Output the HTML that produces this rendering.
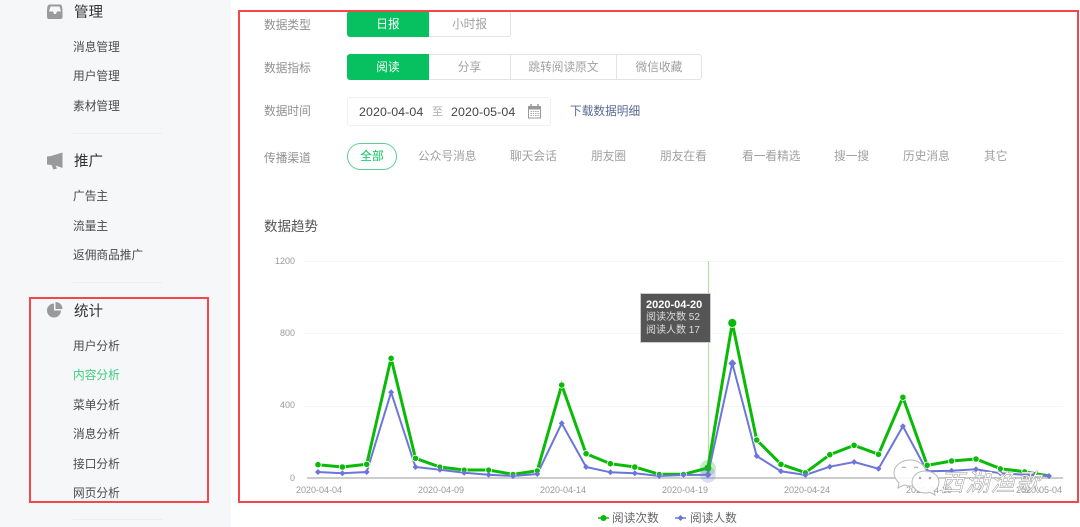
<!DOCTYPE html>
<html lang="zh">
<head>
<meta charset="utf-8">
<title>内容分析</title>
<style>
html,body{margin:0;padding:0;background:#fff}
#p{position:relative;width:1080px;height:527px;overflow:hidden;background:#fff;font-family:"Liberation Sans","Noto Sans CJK SC",sans-serif;font-size:11.7px;filter:blur(.35px)}
#p div,#p span{position:absolute;box-sizing:border-box}
.t{line-height:20px;white-space:nowrap}
.s{color:#4a4a4a;left:73px}
.h{color:#333;left:74px;font-size:14.5px}
.l{color:#8f8f8f;left:264px}
.c{color:#a0a0a0}
.b{border:1px solid #e0e4e7;color:#a0a0a0;text-align:center;height:26px;line-height:25px;background:#fff}
.g{background:#07c160;color:#fff;border-color:#07c160;border-radius:3px 0 0 3px}
.d{height:1px;left:73px;width:89px;background:#eceef0}
.a{font-size:9px;color:#999;line-height:12px;white-space:nowrap}
svg{position:absolute;left:0;top:0}
</style>
</head>
<body>
<div id="p">
<div style="left:0;top:0;width:231px;height:527px;background:#f6f7f9"></div>

<svg width="1080" height="527" viewBox="0 0 1080 527">
  <path fill="#9a9a9a" fill-rule="evenodd" d="M50 4.500h10q1.500 0 2 2l.5 3V17q0 2-2 2H49q-2 0-2-2V9.500l.5-3q.5-2 2.500-2zM50.500 6.500l-1.500 5h4l1 2.500h2l1-2.500h4l-1.500-5z"/>
  <path fill="#9a9a9a" d="M47 156.500l4-.5 11.500-3.500v15.500l-7-2.500 1.500 3-3.500 1-2-4.500-4.500-.5z"/>
  <path fill="#9a9a9a" d="M54 303.500v7h7a7 7 0 1 1-7-7z"/>
  <path fill="#9a9a9a" d="M55.500 302a7 7 0 0 1 7 7h-7z"/>
</svg>

<span class="t h" style="top:3px">管理</span>
<span class="t s" style="top:38px">消息管理</span>
<span class="t s" style="top:67px">用户管理</span>
<span class="t s" style="top:97px">素材管理</span>
<div class="d" style="top:133px"></div>
<span class="t h" style="top:152px">推广</span>
<span class="t s" style="top:187px">广告主</span>
<span class="t s" style="top:217px">流量主</span>
<span class="t s" style="top:246px">返佣商品推广</span>
<div class="d" style="top:282px"></div>
<span class="t h" style="top:302px">统计</span>
<span class="t s" style="top:337px">用户分析</span>
<span class="t s" style="top:366px;color:#3ccb7f">内容分析</span>
<span class="t s" style="top:396px">菜单分析</span>
<span class="t s" style="top:425px">消息分析</span>
<span class="t s" style="top:455px">接口分析</span>
<span class="t s" style="top:484px">网页分析</span>
<div class="d" style="top:519px"></div>

<span class="t l" style="top:16px">数据类型</span>
<div class="b g" style="left:347px;top:11px;width:82px">日报</div>
<div class="b" style="left:429px;top:11px;width:82px;border-left:0;border-radius:0 3px 3px 0">小时报</div>

<span class="t l" style="top:59px">数据指标</span>
<div class="b g" style="left:347px;top:54px;width:82px">阅读</div>
<div class="b" style="left:429px;top:54px;width:82px;border-left:0">分享</div>
<div class="b" style="left:510px;top:54px;width:107px">跳转阅读原文</div>
<div class="b" style="left:617px;top:54px;width:85px;border-left:0;border-radius:0 3px 3px 0">微信收藏</div>

<span class="t l" style="top:102px">数据时间</span>
<div style="left:347px;top:97px;width:204px;height:29px;border:1px solid #eef0f2;border-radius:3px"></div>
<span class="t" style="left:359px;top:102px;color:#444;font-size:12.400px;letter-spacing:.1px">2020-04-04</span>
<span class="t" style="left:432px;top:102px;color:#aaa;font-size:11px">至</span>
<span class="t" style="left:451px;top:102px;color:#444;font-size:12.400px;letter-spacing:.1px">2020-05-04</span>
<svg width="1080" height="527" viewBox="0 0 1080 527">
  <rect x="528.500" y="106.500" width="12" height="11.500" fill="none" stroke="#999"/>
  <rect x="528" y="106" width="13" height="3.500" fill="#999"/>
  <path d="M531 104v3M538 104v3" stroke="#999" stroke-width="1.500"/>
  <path d="M530.500 111.500h9M530.500 113.500h9M530.500 115.500h9" stroke="#aaa" stroke-dasharray="1.500 .8"/>
</svg>
<span class="t" style="left:570px;top:102px;color:#576b95">下载数据明细</span>

<span class="t l" style="top:149px">传播渠道</span>
<div style="left:347px;top:143px;width:50px;height:27px;border:1px solid #5ed093;border-radius:14px;color:#07c160;text-align:center;line-height:25px">全部</div>
<span class="t c" style="left:418px;top:147px">公众号消息</span>
<span class="t c" style="left:510px;top:147px">聊天会话</span>
<span class="t c" style="left:591px;top:147px">朋友圈</span>
<span class="t c" style="left:660px;top:147px">朋友在看</span>
<span class="t c" style="left:742px;top:147px">看一看精选</span>
<span class="t c" style="left:834px;top:147px">搜一搜</span>
<span class="t c" style="left:903px;top:147px">历史消息</span>
<span class="t c" style="left:984px;top:147px">其它</span>

<span class="t" style="left:264px;top:217px;color:#555;font-size:13.500px">数据趋势</span>

<span class="a" style="left:275px;top:255px">1200</span>
<span class="a" style="left:280px;top:327px">800</span>
<span class="a" style="left:280px;top:399px">400</span>
<span class="a" style="left:290px;top:472px">0</span>
<span class="a" style="left:296px;top:484px">2020-04-04</span>
<span class="a" style="left:418px;top:484px">2020-04-09</span>
<span class="a" style="left:540px;top:484px">2020-04-14</span>
<span class="a" style="left:662px;top:484px">2020-04-19</span>
<span class="a" style="left:784px;top:484px">2020-04-24</span>
<span class="a" style="left:906px;top:484px">2020-04-29</span>
<span class="a" style="left:1016px;top:484px">2020-05-04</span>

<svg width="1080" height="527" viewBox="0 0 1080 527">
  <path d="M303 261.500H1063M303 333.500H1063M303 406.500H1063" stroke="#f5f5f5"/>
  <path d="M307 478H1063" stroke="#ccc" stroke-width="2"/>
  <path d="M708.500 261V478" stroke="#a5e69c"/>
  <polyline fill="none" stroke="#09bb07" stroke-width="3" points="318,464.700 342.400,467 366.700,464.300 391.100,358.300 415.500,458.300 439.900,467 464.200,470 488.600,470 513,474.300 537.300,470.700 561.700,385 586.100,453.700 610.400,463.700 634.800,467 659.200,474.300 683.500,474.300 707.900,468 732.300,323 756.700,440 781,464.300 805.400,472.700 829.800,454.700 854.100,445.300 878.500,454.300 902.900,397.300 927.200,465.300 951.600,461 976,459 1000.400,468.700 1024.700,471.700 1049,476"/>
  <polyline fill="none" stroke="#6b76d8" stroke-width="2" points="318,472 342.400,473.300 366.700,472 391.100,392.300 415.500,467 439.900,469.700 464.200,472.700 488.600,474.700 513,476 537.300,474 561.700,423.300 586.100,467 610.400,472.300 634.800,473.300 659.200,476 683.500,475 707.900,474.700 732.300,363.300 756.700,456 781,471.300 805.400,475 829.800,466.700 854.100,462 878.500,468.700 902.900,426.300 927.200,471.300 951.600,470.700 976,469.300 1000.400,473.300 1024.700,474.700 1049,476"/>
  <g fill="#09bb07" stroke="#fff" stroke-width=".8">
    <circle cx="318" cy="464.700" r="3.200"/><circle cx="342.400" cy="467" r="3.200"/><circle cx="366.700" cy="464.300" r="3.200"/><circle cx="391.100" cy="358.300" r="3.200"/><circle cx="415.500" cy="458.300" r="3.200"/><circle cx="439.900" cy="467" r="3"/><circle cx="464.200" cy="470" r="3"/><circle cx="488.600" cy="470" r="3"/><circle cx="513" cy="474.300" r="3"/><circle cx="537.300" cy="470.700" r="3"/><circle cx="561.700" cy="385" r="3.200"/><circle cx="586.100" cy="453.700" r="3.200"/><circle cx="610.400" cy="463.700" r="3.200"/><circle cx="634.800" cy="467" r="3.200"/><circle cx="659.200" cy="474.300" r="3"/><circle cx="683.500" cy="474.300" r="3"/><circle cx="732.300" cy="323" r="4.500"/><circle cx="756.700" cy="440" r="3.200"/><circle cx="781" cy="464.300" r="3.200"/><circle cx="805.400" cy="472.700" r="3"/><circle cx="829.800" cy="454.700" r="3.200"/><circle cx="854.100" cy="445.300" r="3.200"/><circle cx="878.500" cy="454.300" r="3.200"/><circle cx="902.900" cy="397.300" r="3.200"/><circle cx="927.200" cy="465.300" r="3.200"/><circle cx="951.600" cy="461" r="3.200"/><circle cx="976" cy="459" r="3.200"/><circle cx="1000.400" cy="468.700" r="3"/><circle cx="1024.700" cy="471.700" r="3"/>
  </g>
  <circle cx="707.900" cy="468" r="8" fill="#09bb07" opacity=".25"/>
  <circle cx="707.900" cy="468" r="3.500" fill="#09bb07"/>
  <circle cx="707.900" cy="474.700" r="8" fill="#6b76d8" opacity=".25"/>
  <g fill="#6b76d8">
    <path d="M707.900 471l3.500 3.700-3.500 3.700-3.500-3.700z"/>
    <path d="M732.300 359.300l4 4-4 4-4-4z"/>
    <path d="M318 469l3 3-3 3-3-3zM342.400 470.300l3 3-3 3-3-3zM366.700 469l3 3-3 3-3-3zM391.100 389.300l3 3-3 3-3-3zM415.500 464l3 3-3 3-3-3zM439.900 466.700l3 3-3 3-3-3zM464.200 469.700l3 3-3 3-3-3zM488.600 471.700l3 3-3 3-3-3zM513 473l3 3-3 3-3-3zM537.300 471l3 3-3 3-3-3zM561.700 420.300l3 3-3 3-3-3zM586.100 464l3 3-3 3-3-3zM610.400 469.300l3 3-3 3-3-3zM634.800 470.300l3 3-3 3-3-3zM659.200 473l3 3-3 3-3-3zM683.500 472l3 3-3 3-3-3zM756.700 453l3 3-3 3-3-3zM781 468.300l3 3-3 3-3-3zM805.400 472l3 3-3 3-3-3zM829.800 463.700l3 3-3 3-3-3zM854.100 459l3 3-3 3-3-3zM878.500 465.700l3 3-3 3-3-3zM902.900 423.300l3 3-3 3-3-3zM927.200 468.300l3 3-3 3-3-3zM951.600 467.700l3 3-3 3-3-3zM976 466.300l3 3-3 3-3-3zM1000.400 470.300l3 3-3 3-3-3zM1024.700 471.700l3 3-3 3-3-3zM1049 473l3 3-3 3-3-3z"/>
  </g>
  <path d="M598 518h11" stroke="#09bb07" stroke-width="1.500"/>
  <circle cx="603.500" cy="518" r="3" fill="#09bb07"/>
  <path d="M675 518h11" stroke="#6b76d8" stroke-width="1.500"/>
  <path d="M680.500 515l3 3-3 3-3-3z" fill="#6b76d8"/>
</svg>

<div style="left:640px;top:293px;width:71px;height:50px;background:#555;border:1px solid #ccc"></div>
<span style="left:646px;top:299px;color:#fff;font-weight:bold;font-size:11px;line-height:13px;white-space:nowrap">2020-04-20</span>
<span style="left:646px;top:311px;color:#ddd;font-size:10px;line-height:13px;white-space:nowrap">阅读次数 52</span>
<span style="left:646px;top:324px;color:#ddd;font-size:10px;line-height:13px;white-space:nowrap">阅读人数 17</span>

<span class="t" style="left:612px;top:509px;color:#666">阅读次数</span>
<span class="t" style="left:690px;top:509px;color:#666">阅读人数</span>

<svg width="1080" height="527" viewBox="0 0 1080 527">
  <path d="M910 460c-9 0-16 6-16 13 0 4 2 7 5 10l-1 5 6-3c2 .7 4 1 6 1 9 0 16-6 16-13s-7-13-16-13z" fill="#fff" fill-opacity=".85" stroke="#b9b9b9"/>
  <path d="M925 471c-7 0-13 5-13 11s6 11 13 11c2 0 3 0 5-.6l5 2.600-1-4c3-2 5-5 5-9 0-6-6-11-14-11z" fill="#fff" fill-opacity=".9" stroke="#b9b9b9"/>
  <path d="M902 468a2.500 2.500 0 0 1 4 0M914 468a2.500 2.500 0 0 1 4 0" fill="none" stroke="#aaa"/>
  <circle cx="920" cy="478" r="1.300" fill="#aaa"/><circle cx="930" cy="478" r="1.300" fill="#aaa"/>
  <text x="940" y="491" font-family="'Liberation Sans','Noto Sans CJK SC',sans-serif" font-size="24" font-style="italic" fill="#fff" stroke="#999" stroke-width=".5" textLength="100">西湖渔歌</text>
</svg>

<div style="left:238px;top:10px;width:841px;height:493px;border:2px solid #f5474a"></div>
<div style="left:29px;top:297px;width:180px;height:206px;border:2px solid #f5474a"></div>
</div>
</body>
</html>
